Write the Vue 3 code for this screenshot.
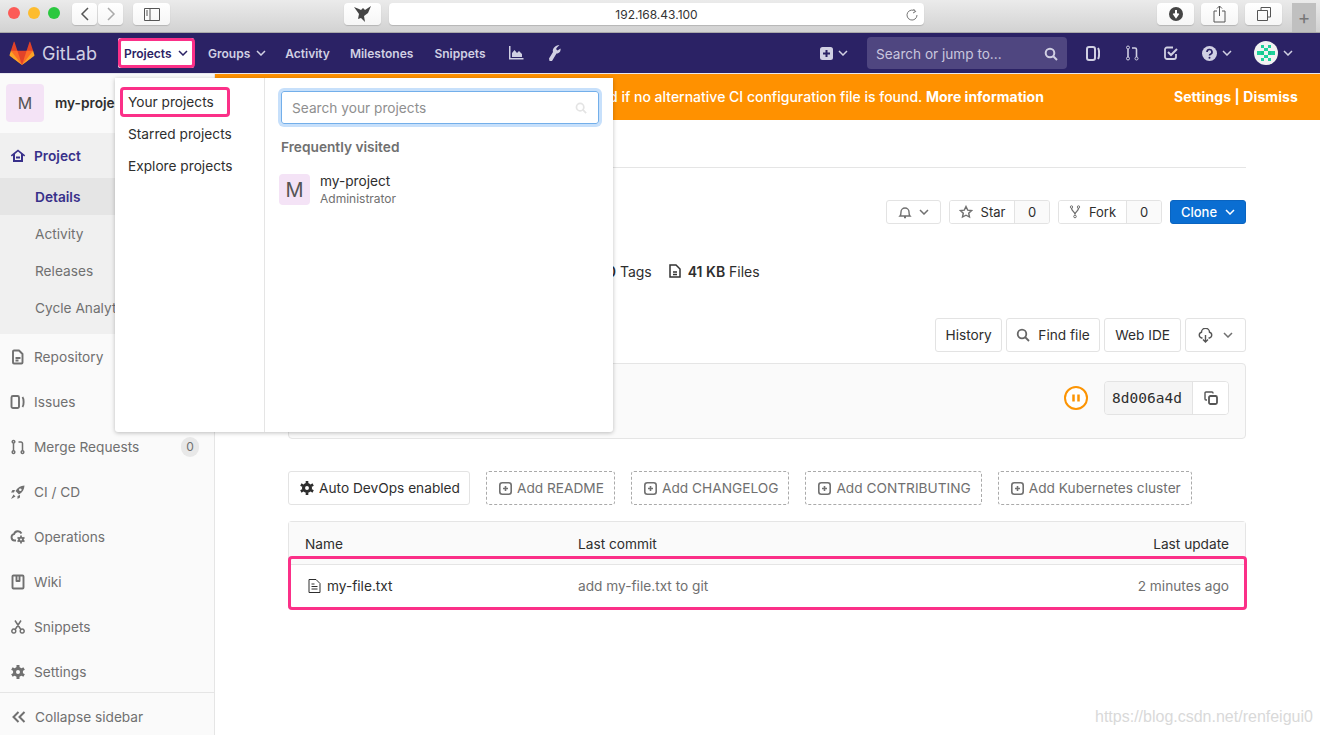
<script setup>
const sideItems = [
  { label: 'Repository', icon: 'M4 1.500h5l3.500 3.500v8.500a1 1 0 0 1-1 1H4a1 1 0 0 1-1-1v-11a1 1 0 0 1 1-1zM5.500 9h5M5.500 11.500h3' },
  { label: 'Issues', icon: 'M3 2h4.500A1.500 1.500 0 0 1 9 3.500v9A1.500 1.500 0 0 1 7.500 14H3a1.500 1.500 0 0 1-1.500-1.500v-9A1.500 1.500 0 0 1 3 2zM12.500 3c1.500 2 1.500 8 0 10' },
  { label: 'Merge Requests', icon: 'M3.500 4.500v7M3.500 1.500a1.300 1.300 0 1 0 .01 0M3.500 11.800a1.300 1.300 0 1 0 .01 0M12.500 11.800V4.500a1.500 1.500 0 0 0-1.500-1.500H8.500M12.500 11.800a1.300 1.300 0 1 0 .01 0', thin: true },
  { label: 'CI / CD', icon: 'M14.500 1.500c-4 .2-7 2-9 5.500l3.500 3.500c3.500-2 5.300-5 5.500-9zM5 6H2.500L1 8.500h3zM10 11v2.500L7.500 15v-3zM3.500 10.500 1 15l4.500-2.500z', filled: true },
  { label: 'Operations', icon: 'M6 11.500H4.500A3.200 3.200 0 0 1 4 5.200a4 4 0 0 1 7.500-.7', cog: true },
  { label: 'Wiki', icon: 'M3.500 1.500h9a1 1 0 0 1 1 1v11a1 1 0 0 1-1 1h-9a1 1 0 0 1-1-1v-11a1 1 0 0 1 1-1zM6.500 2v5h3V2' },
  { label: 'Snippets', icon: 'M5 1.500 10.500 10M11 1.500 5.500 10M3.800 10a2 2 0 1 0 .01 0M12.200 10a2 2 0 1 0 .01 0', thin: true },
  { label: 'Settings', gear: true },
]
const subItems = ['Activity', 'Releases', 'Cycle Analytics']
const addButtons = ['Add README', 'Add CHANGELOG', 'Add CONTRIBUTING', 'Add Kubernetes cluster']
const menuItems = ['Your projects', 'Starred projects', 'Explore projects']
</script>

<template>
  <div class="app">
    <header class="chrome">
      <div class="lights"><i class="red"></i><i class="yellow"></i><i class="green"></i></div>
      <div class="pair">
        <button class="cbtn back"><svg width="10" height="16" viewBox="0 0 10 16"><path d="M8 2 2 8l6 6" class="cstroke" /></svg></button>
        <button class="cbtn fwd"><svg width="10" height="16" viewBox="0 0 10 16"><path d="m2 2 6 6-6 6" class="cstroke dim" /></svg></button>
      </div>
      <button class="cbtn sidebar-btn"><svg width="16" height="13" viewBox="0 0 16 13"><path d="M.5.5h15v12H.5zM6 .5v12M2 3h2M2 5h2M2 7h2" fill="none" stroke="#555" /></svg></button>
      <button class="cbtn bird"><svg width="20" height="18" viewBox="0 0 20 18"><path d="M1 2l5 2 2 1 2-2 2 2 6-4-3 7-4 3 1 6-4-4-3 1 1-5z" fill="#444" /></svg></button>
      <div class="address"><span>192.168.43.100</span><svg class="reload" width="12" height="13" viewBox="0 0 12 13"><path d="M9.500 3.500A5 5 0 1 0 11 7M7.500 1l2.200 2.500-2.700 1.500" fill="none" stroke="#777" /></svg></div>
      <button class="cbtn tool dl"><svg width="14" height="14" viewBox="0 0 14 14"><circle cx="7" cy="7" r="7" fill="#444" /><path d="M7 3v5M4.500 6.500 7 10l2.500-3.500" stroke="#fff" stroke-width="2" fill="none" /></svg></button>
      <button class="cbtn tool"><svg width="13" height="18" viewBox="0 0 13 18"><path d="M4 6H1v11h11V6H9M6.500 11V1M4 3.500 6.500 1 9 3.500" fill="none" stroke="#555" /></svg></button>
      <button class="cbtn tool"><svg width="14" height="14" viewBox="0 0 14 14"><path d="M4 3.500V.5h9.500V10H10.500M.5 3.500h10v10H.5z" fill="none" stroke="#555" /></svg></button>
      <div class="newtab">+</div>
    </header>

    <nav class="navbar">
      <svg class="logo" width="26" height="25" viewBox="0 0 36 36">
        <path fill="#e24329" d="M2 14l9.380 9v-9l-4-12.280c-.205-.632-1.176-.632-1.380 0z" />
        <path fill="#e24329" d="M34 14l-9.380 9v-9l4-12.280c.205-.632 1.176-.632 1.380 0z" />
        <path fill="#e24329" d="M18 34.380 3 14h30z" />
        <path fill="#fc6d26" d="M18 34.380 11.380 14H2l4 11z" />
        <path fill="#fc6d26" d="M18 34.380 24.620 14H34l-4 11z" />
        <path fill="#fca326" d="M2 14 .1 20.160c-.18.565 0 1.200.5 1.560l17.420 12.660z" />
        <path fill="#fca326" d="m34 14 1.900 6.160c.18.565 0 1.200-.5 1.560L18 34.380z" />
      </svg>
      <span class="brand">GitLab</span>
      <a class="nav-link active">Projects<svg class="chev" width="10" height="6" viewBox="0 0 10 6"><path d="m1 1 4 4 4-4" /></svg></a>
      <a class="nav-link groups">Groups<svg class="chev" width="10" height="6" viewBox="0 0 10 6"><path d="m1 1 4 4 4-4" /></svg></a>
      <a class="nav-link">Activity</a>
      <a class="nav-link miles">Milestones</a>
      <a class="nav-link">Snippets</a>
      <svg class="nav-icon chart" width="16" height="16" viewBox="0 0 16 16"><path d="M1 1v13.500h14.500V13H2.500V1zM4 12V8l2.500-3 2.500 3 2-2 3 3v3z" fill="#d1d0e3" /></svg>
      <svg class="nav-icon wrench" width="14" height="18" viewBox="0 0 14 18"><path d="M12.500 1 10 3.500 9 5l1.500 1.500 3-2c.5 2.500-1 5-4 5L5 17H2.500L2 14.500 6 8c-1-3 2-7 6.500-7z" fill="#d1d0e3" /></svg>
      <div class="nav-right">
        <svg class="nav-icon" width="13" height="13" viewBox="0 0 13 13"><rect width="13" height="13" rx="2.500" fill="#d1d0e3" /><path d="M6.500 3v7M3 6.500h7" stroke="#2b2265" stroke-width="2" /></svg>
        <svg class="chev small" width="10" height="6" viewBox="0 0 10 6"><path d="m1 1 4 4 4-4" /></svg>
        <div class="nav-search"><span>Search or jump to...</span>
          <svg width="14" height="14" viewBox="0 0 14 14"><circle cx="6" cy="6" r="4.300" fill="none" stroke="#d1d0e3" stroke-width="2" /><path d="m9 9 4 4" stroke="#d1d0e3" stroke-width="2" /></svg>
        </div>
        <svg class="nav-icon i-issues" width="14" height="15" viewBox="0 0 14 15"><rect x="1" y="1" width="8" height="13" rx="2" fill="none" stroke="#d1d0e3" stroke-width="2" /><path d="M12 2c1.500 2 1.500 9 0 11" fill="none" stroke="#d1d0e3" stroke-width="2" /></svg>
        <svg class="nav-icon i-mr" width="14" height="16" viewBox="0 0 14 16"><path d="M3 4v8M11.500 12V4.500A1.500 1.500 0 0 0 10 3H7" fill="none" stroke="#d1d0e3" stroke-width="1.600" /><circle cx="3" cy="2.500" r="1.500" fill="none" stroke="#d1d0e3" /><circle cx="3" cy="13.500" r="1.500" fill="none" stroke="#d1d0e3" /><circle cx="11.500" cy="13.500" r="1.500" fill="none" stroke="#d1d0e3" /></svg>
        <svg class="nav-icon i-todo" width="14" height="14" viewBox="0 0 14 14"><path d="M12 8v3a2 2 0 0 1-2 2H3a2 2 0 0 1-2-2V3.500a2 2 0 0 1 2-2h6" fill="none" stroke="#d1d0e3" stroke-width="1.800" /><path d="m4 6 3 3 6-6" fill="none" stroke="#d1d0e3" stroke-width="2" /></svg>
        <svg class="nav-icon i-help" width="15" height="15" viewBox="0 0 15 15"><circle cx="7.500" cy="7.500" r="7.500" fill="#d1d0e3" /><path d="M5 6a2.500 2.500 0 1 1 3.500 2.300c-.7.300-1 .7-1 1.200" fill="none" stroke="#2b2265" stroke-width="1.700" /><circle cx="7.500" cy="11.700" r="1" fill="#2b2265" /></svg>
        <svg class="chev small" width="10" height="6" viewBox="0 0 10 6"><path d="m1 1 4 4 4-4" /></svg>
        <svg class="identicon" width="24" height="24" viewBox="0 0 24 24">
          <circle cx="12" cy="12" r="12" fill="#f2f2f2" />
          <path d="M7 4h3v3H7zM14 4h3v3h-3zM10 7h4v3h-4zM3 10h4v4H3zM17 10h4v4h-4zM10 14h4v3h-4zM7 17h3v3H7zM14 17h3v3h-3z" fill="#1fd19b" />
          <path d="M7 10h3v4H7zM14 10h3v4h-3z" fill="#17c98f" />
        </svg>
        <svg class="chev small" width="10" height="6" viewBox="0 0 10 6"><path d="m1 1 4 4 4-4" /></svg>
      </div>
    </nav>

    <div class="body">
      <aside class="sidebar">
        <div class="side-head"><div class="avatar">M</div><b>my-project</b></div>
        <div class="side-scroll">
          <section class="side-active">
            <div class="side-title">
              <svg width="16" height="16" viewBox="0 0 16 16"><path fill-rule="evenodd" d="M8 1.500.8 7.300l1 1.200L3 7.500V14h10V7.500l1.200 1 1-1.200zM5 12V6l3-2.400L11 6v6zM6 8.500h4v2H6z" fill="#38308a" /></svg>
              Project
            </div>
            <div class="sub current">Details</div>
            <div v-for="s in subItems" :key="s" class="sub">{{ s }}</div>
          </section>
          <div v-for="item in sideItems" :key="item.label" class="side-item">
            <svg v-if="item.gear" width="16" height="16" viewBox="0 0 16 16">
              <path d="M8 1v14M1.900 4.500l12.200 7M1.900 11.500l12.200-7" stroke="#707070" stroke-width="3" />
              <circle cx="8" cy="8" r="5" fill="#707070" /><circle cx="8" cy="8" r="2" fill="#fafafa" />
            </svg>
            <svg v-else-if="item.filled" width="16" height="16" viewBox="0 0 16 16"><path :d="item.icon" fill="#707070" /><circle cx="10.300" cy="5.700" r="1.300" fill="#fafafa" /></svg>
            <svg v-else width="16" height="16" viewBox="0 0 16 16">
              <path :d="item.icon" fill="none" stroke="#707070" stroke-linejoin="round" :stroke-width="item.thin ? 1.500 : 1.900" />
              <template v-if="item.cog">
                <path d="M11 6.500v8M7.500 8.500l7 4M7.500 12.500l7-4" stroke="#707070" stroke-width="1.700" />
                <circle cx="11" cy="10.500" r="2.800" fill="#707070" /><circle cx="11" cy="10.500" r="1" fill="#fafafa" />
              </template>
            </svg>
            {{ item.label }}
            <span v-if="item.label === 'Merge Requests'" class="badge">0</span>
          </div>
        </div>
        <div class="collapse">
          <svg width="14" height="12" viewBox="0 0 14 12"><path d="M6.500 1 1.500 6l5 5M12.500 1l-5 5 5 5" fill="none" stroke="#707070" stroke-width="2" /></svg>
          Collapse sidebar
        </div>
      </aside>

      <main class="main">
        <div class="banner">
          <span class="banner-msg">The Auto DevOps pipeline has been enabled and will be used if no alternative CI configuration file is found. <b>More information</b></span>
          <b class="banner-act">Settings | Dismiss</b>
        </div>
        <div class="content">
          <div class="crumbs"></div>
          <div class="actions">
            <button class="btn sm bell">
              <svg width="14" height="14" viewBox="0 0 14 14"><path d="M2 11c1-1 1-2 1-4a4 4 0 0 1 8 0c0 2 0 3 1 4zM6 12.500h2" fill="none" stroke="#707070" stroke-width="1.400" /></svg>
              <svg class="chev grey" width="10" height="6" viewBox="0 0 10 6"><path d="m1 1 4 4 4-4" /></svg>
            </button>
            <div class="split">
              <button class="btn sm left"><svg width="14" height="14" viewBox="0 0 14 14"><path d="m7 1.500 1.700 3.600 3.800.5-2.800 2.600.8 3.800L7 10.200 3.500 12l.8-3.800L1.500 5.600l3.800-.5z" fill="none" stroke="#707070" stroke-width="1.400" /></svg>Star</button>
              <span class="count">0</span>
            </div>
            <div class="split">
              <button class="btn sm left"><svg width="12" height="14" viewBox="0 0 12 14"><path d="M2.500 3c0 4 3.500 3 3.500 6.500M9.500 3C9.500 7 6 6 6 9.500" fill="none" stroke="#707070" stroke-width="1.300" /><circle cx="2.500" cy="2" r="1.200" fill="none" stroke="#707070" /><circle cx="9.500" cy="2" r="1.200" fill="none" stroke="#707070" /><circle cx="6" cy="11.500" r="1.300" fill="none" stroke="#707070" /></svg>Fork</button>
              <span class="count">0</span>
            </div>
            <button class="btn sm clone">Clone<svg class="chev" width="10" height="6" viewBox="0 0 10 6"><path d="m1 1 4 4 4-4" /></svg></button>
          </div>
          <div class="stats">
            <span><b>1</b> Commit</span><span><b>1</b> Branch</span><span><b>0</b> Tags</span>
            <span class="stat-files"><svg width="12" height="14" viewBox="0 0 12 14"><path d="M2 1h5l4 4v8H1V1zM4 8h4M4 10.500h4" fill="none" stroke="#333" stroke-width="1.500" /></svg><span><b>41 KB</b> Files</span></span>
          </div>
          <div class="tree-actions">
            <button class="btn md hist">History</button>
            <button class="btn md"><svg width="14" height="14" viewBox="0 0 14 14"><circle cx="6" cy="6" r="4.300" fill="none" stroke="#666" stroke-width="1.800" /><path d="m9 9 4 4" stroke="#666" stroke-width="1.800" /></svg>Find file</button>
            <button class="btn md ide">Web IDE</button>
            <button class="btn md dlbtn">
              <svg width="15" height="15" viewBox="0 0 15 15"><path d="M4.500 10H3.500a3 3 0 0 1 0-5.800 4 4 0 0 1 8 0 3 3 0 0 1 0 5.800h-1M7.500 7v7M5 11.500 7.500 14 10 11.500" fill="none" stroke="#555" stroke-width="1.400" /></svg>
              <svg class="chev grey" width="10" height="6" viewBox="0 0 10 6"><path d="m1 1 4 4 4-4" /></svg>
            </button>
          </div>
          <div class="commit">
            <div class="commit-msg"><b>add my-file.txt to git</b><span>Administrator authored 2 minutes ago</span></div>
            <svg class="pause" width="24" height="24" viewBox="0 0 24 24"><circle cx="12" cy="12" r="11" fill="#fff" stroke="#fc9403" stroke-width="2" /><path d="M9.500 8.500v7M14.500 8.500v7" stroke="#fc9403" stroke-width="2.500" /></svg>
            <div class="sha"><code>8d006a4d</code><span class="copy"><svg width="14" height="14" viewBox="0 0 14 14"><path d="M9 2.500V2a1 1 0 0 0-1-1H2a1 1 0 0 0-1 1v6a1 1 0 0 0 1 1h1" fill="none" stroke="#555" stroke-width="1.400" /><rect x="5" y="5" width="8" height="8" rx="1.500" fill="none" stroke="#555" stroke-width="1.800" /></svg></span></div>
          </div>
          <div class="quick">
            <button class="btn qbtn auto"><svg width="14" height="14" viewBox="0 0 16 16"><circle cx="8" cy="8" r="4" fill="none" stroke="#2e2e2e" stroke-width="3.500" /><path d="M8 0v3M8 13v3M1 4l2.500 1.500M12.500 10.500 15 12M1 12l2.500-1.500M12.500 5.500 15 4" stroke="#2e2e2e" stroke-width="3" /></svg>Auto DevOps enabled</button>
            <button v-for="b in addButtons" :key="b" class="btn qbtn dashed">
              <svg width="13" height="13" viewBox="0 0 13 13"><rect x=".8" y=".8" width="11.400" height="11.400" rx="2.500" fill="none" stroke="#707070" stroke-width="1.600" /><path d="M6.500 4v5M4 6.500h5" stroke="#707070" stroke-width="1.600" /></svg>{{ b }}
            </button>
          </div>
          <div class="table">
            <div class="row head"><span>Name</span><span>Last commit</span><span class="right">Last update</span></div>
            <div class="row file">
              <span class="fname"><svg width="13" height="14" viewBox="0 0 13 14"><path d="M1 .5h7l4 4v9H1zM3.500 5h3M3.500 7.500h6M3.500 10h6" fill="none" stroke="#2e2e2e" /></svg>my-file.txt</span>
              <span class="muted">add my-file.txt to git</span>
              <span class="muted right">2 minutes ago</span>
            </div>
          </div>
        </div>
      </main>
    </div>

    <div class="dropdown">
      <ul class="menu">
        <li v-for="m in menuItems" :key="m">{{ m }}</li>
      </ul>
      <div class="panel">
        <div class="panel-search"><span>Search your projects</span>
          <svg width="12" height="12" viewBox="0 0 14 14"><circle cx="6" cy="6" r="4.300" fill="none" stroke="#e4e4e4" stroke-width="2" /><path d="m9 9 4 4" stroke="#e4e4e4" stroke-width="2" /></svg>
        </div>
        <h4>Frequently visited</h4>
        <div class="recent">
          <div class="avatar big">M</div>
          <div class="recent-text"><span>my-project</span><small>Administrator</small></div>
        </div>
      </div>
    </div>

    <div class="mark mark-nav"></div>
    <div class="mark mark-menu"></div>
    <div class="mark mark-row"></div>
    <div class="watermark">https://blog.csdn.net/renfeigui0</div>
  </div>
</template>

<style>
html, body { margin: 0; background: #fff; overflow: hidden; }
</style>

<style scoped>
.app { position: relative; width: 1320px; height: 735px; overflow: hidden; display: flex; flex-direction: column; font-family: Inter, "Liberation Sans", sans-serif; font-size: 13.7px; color: #2e2e2e; }
button { font-family: inherit; font-size: inherit; margin: 0; }
.chrome { flex: none; display: flex; align-items: flex-start; background: linear-gradient(#ebebeb, #d2d2d2); border-bottom: 1px solid #aaa; padding-top: 3px; box-sizing: content-box; height: 29px; }
.lights { display: flex; gap: 8px; margin: 4px 0 0 8px; width: 64px; }
.lights i { width: 12px; height: 12px; border-radius: 50%; }
.red { background: #fc5b57; } .yellow { background: #fdbc2e; } .green { background: #2ac83f; }
.cbtn { height: 22px; border: 0; background: linear-gradient(#fff, #f6f6f6); border-radius: 4px; box-shadow: 0 1px 1px #b5b5b5; display: flex; align-items: center; justify-content: center; padding: 0; }
.pair { display: flex; gap: 1px; }
.back, .fwd { width: 25px; }
.cstroke { fill: none; stroke: #555; stroke-width: 1.500; }
.dim { stroke: #aaa; }
.sidebar-btn { width: 37px; margin-left: 10px; }
.bird { width: 37px; margin-left: 174px; }
.address { width: 535px; height: 22px; margin-left: 8px; background: #fff; border-radius: 4px; box-shadow: 0 1px 1px #b5b5b5; display: flex; align-items: center; justify-content: center; position: relative; font-size: 12px; color: #333; }
.reload { position: absolute; right: 6px; top: 5px; }
.tool { width: 37px; margin-left: 7px; }
.dl { margin-left: 233px; }
.newtab { width: 24px; height: 29px; margin: 0 0 0 10px; background: #c0c0c0; color: #777; font-size: 19px; text-align: center; line-height: 30px; }

.navbar { height: 40px; flex: none; background: #2b2265; display: flex; align-items: center; border-bottom: 1px solid #e7e7f0; color: #d1d0e3; font-weight: 600; font-size: 12px; }
.logo { margin-left: 9px; }
.brand { color: #d1d0e3; font-size: 18px; font-weight: 400; margin-left: 7px; width: 76px; }
.nav-link { display: flex; align-items: center; gap: 6px; margin-right: 20px; white-space: nowrap; }
.nav-link.groups { margin-right: 19px; }
.nav-link.miles { margin-right: 21px; }
.nav-link.active { color: #2b2265; background: #fff; height: 30px; margin-right: 14px; padding: 0 6px; width: 64px; border-radius: 2px; }
.chev { fill: none; stroke: currentColor; stroke-width: 1.500; flex: none; }
.chev.grey { color: #707070; }
.nav-icon { flex: none; }
.chart { margin: 0 23px 0 3px; }
.nav-right { margin-left: auto; display: flex; align-items: center; padding-right: 27px; }
.chev.small { margin-left: 5px; }
.nav-search { width: 200px; height: 32px; margin-left: 19px; background: #4f4680; border-radius: 4px; display: flex; align-items: center; justify-content: space-between; padding: 1px 9px 0; box-sizing: border-box; font-weight: 400; font-size: 13.6px; color: #c9c6de; }
.i-issues { margin-left: 19px; }
.i-mr { margin-left: 25px; }
.i-todo { margin-left: 25px; }
.i-help { margin-left: 24px; }
.identicon { margin-left: 22px; }

.body { flex: 1; display: flex; min-height: 0; }
.sidebar { width: 215px; flex: none; box-sizing: border-box; background: #fafafa; border-right: 1px solid #e5e5e5; display: flex; flex-direction: column; color: #707070; }
.side-head { height: 59px; flex: none; box-sizing: border-box; padding: 0 0 1px 6px; display: flex; align-items: center; gap: 11px; color: #2e2e2e; }
.side-head b { font-weight: 600; width: 60px; overflow: hidden; white-space: nowrap; }
.avatar { width: 38px; height: 38px; background: #f4e3f6; border-radius: 4px; display: flex; align-items: center; justify-content: center; color: #555; font-size: 16px; }
.side-scroll { flex: 1; min-height: 0; margin-bottom: -2px; }
.side-active { background: #f0f0f0; padding-bottom: 8px; }
.side-title { height: 45px; display: flex; align-items: center; gap: 8px; padding-left: 10px; color: #38308a; font-weight: 600; }
.sub { height: 37px; display: flex; align-items: center; padding-left: 35px; white-space: nowrap; }
.sub.current { background: #e5e5e5; color: #38308a; font-weight: 600; }
.side-item { height: 45px; display: flex; align-items: center; gap: 8px; padding-left: 10px; position: relative; }
.badge { position: absolute; left: 181px; top: 13px; width: 18px; height: 20px; border-radius: 10px; background: #e8e8e8; text-align: center; font-size: 12px; line-height: 20px; }
.collapse { height: 43px; flex: none; box-sizing: border-box; padding: 5px 0 0 12px; position: relative; background: #fafafa; border-top: 1px solid #e5e5e5; display: flex; align-items: center; gap: 9px; }

.main { flex: 1; min-width: 0; overflow: hidden; }
.banner { height: 46px; box-sizing: border-box; padding: 0 22px 1px 0; background: #ff9100; color: #fff; display: flex; align-items: center; justify-content: flex-end; gap: 130px; font-size: 14px; font-weight: 500; white-space: nowrap; }
.banner b { font-weight: 700; }
.banner-act { letter-spacing: .1px; }
.content { padding: 0 74px 0 73px; }
.crumbs { height: 47px; border-bottom: 1px solid #e5e5e5; }
.actions { display: flex; justify-content: flex-end; gap: 8px; margin-top: 32px; height: 24px; }
.btn { background: #fff; border: 1px solid #e3e3e3; border-radius: 3px; color: #2e2e2e; display: inline-flex; align-items: center; justify-content: center; gap: 8px; padding: 0; white-space: nowrap; box-sizing: border-box; }
.sm { height: 24px; font-size: 13px; }
.bell { width: 55px; gap: 7px; }
.split { display: flex; border: 1px solid #e3e3e3; border-radius: 3px; height: 24px; box-sizing: border-box; overflow: hidden; }
.split .left { border: 0; height: 22px; width: 65px; border-right: 1px solid #e3e3e3; border-radius: 0; }
.split:nth-of-type(2) .left { width: 68px; }
.count { width: 34px; background: #fafafa; text-align: center; line-height: 22px; font-size: 13px; }
.clone { width: 76px; background: #0a6ed2; color: #fff; border-color: #0a64c0; font-weight: 500; }
.stats { display: flex; gap: 17px; margin-top: 37px; height: 20px; align-items: center; padding-left: 167px; white-space: nowrap; font-size: 14px; }
.stats b { font-weight: 600; }
.stat-files { display: inline-flex; align-items: center; gap: 7px; }
.tree-actions { display: flex; justify-content: flex-end; gap: 4px; margin-top: 37px; height: 34px; }
.md { height: 34px; padding: 0 9.500px; }
.md.hist { padding: 0 9px; }
.md.ide { padding: 0 10px; }
.dlbtn { width: 61px; gap: 10px; }
.commit { height: 76px; margin-top: 11px; box-sizing: border-box; background: #fafafa; border: 1px solid #e5e5e5; border-radius: 4px; display: flex; align-items: center; padding: 0 16px; }
.commit-msg { display: flex; flex-direction: column; gap: 6px; margin-right: auto; }
.pause { margin: 0 16px 6px 0; }
.sha { display: flex; height: 34px; width: 125px; box-sizing: border-box; border: 1px solid #e3e3e3; border-radius: 4px; overflow: hidden; margin-bottom: 6px; }
.sha code { width: 88px; flex: none; box-sizing: border-box; padding-right: 3px; background: #f5f5f5; border-right: 1px solid #e3e3e3; display: flex; align-items: center; justify-content: center; font-family: "DejaVu Sans Mono", monospace; font-size: 14.500px; }
.copy { flex: 1; background: #fff; display: flex; align-items: center; justify-content: center; }
.quick { display: flex; gap: 16px; margin-top: 32px; }
.qbtn { height: 34px; padding: 0 10px 0 12px; gap: 5px; }
.qbtn.auto { padding: 0 9px 0 11px; }
.dashed { border: 1px dashed #aaa; color: #707070; background: #fff; }
.table { margin-top: 16px; border: 1px solid #e5e5e5; border-bottom: 0; border-radius: 4px 4px 0 0; }
.row { display: grid; grid-template-columns: 273px 1fr 200px; padding: 0 16px; }
.head { height: 43px; box-sizing: border-box; background: #fafafa; align-items: center; padding-top: 2px; border-bottom: 1px solid #e5e5e5; }
.file { height: 43px; box-sizing: border-box; padding-bottom: 2px; align-items: center; }
.right { text-align: right; }
.muted { color: #707070; }
.fname { display: flex; align-items: center; gap: 6px; padding-left: 3px; }

.dropdown { position: absolute; left: 115px; top: 78px; width: 498px; height: 354px; background: #fff; border-radius: 0 0 3px 3px; box-shadow: 0 1px 4px rgba(0, 0, 0, .25); display: flex; }
.menu { width: 149px; margin: 0; padding: 8px 0 0; list-style: none; border-right: 1px solid #e5e5e5; flex: none; }
.menu li { height: 32px; display: flex; align-items: center; padding-left: 13px; }
.panel { flex: 1; padding: 13px 14px 0 16px; }
.panel-search { height: 33px; box-sizing: border-box; border: 1px solid #73afea; border-radius: 3px; box-shadow: 0 0 0 3px #c7e0fb; display: flex; align-items: center; justify-content: space-between; padding: 0 11px 0 10px; color: #8f8f8f; }
.panel h4 { margin: 15px 0 0; font-size: 13.7px; line-height: 17px; font-weight: 600; color: #707070; }
.recent { display: flex; margin: 18px 0 0 -2px; gap: 10px; }
.avatar.big { width: 31px; height: 31px; font-size: 20px; }
.recent-text { display: flex; flex-direction: column; margin-top: -2px; line-height: 18px; }
.recent-text small { font-size: 12px; color: #707070; }

.mark { position: absolute; border: 3px solid #fb3088; border-radius: 4px; box-sizing: border-box; pointer-events: none; }
.mark-nav { left: 118px; top: 38px; width: 77px; height: 30px; }
.mark-menu { left: 120px; top: 87px; width: 110px; height: 30px; }
.mark-row { left: 288px; top: 556px; width: 959px; height: 54px; }
.watermark { position: absolute; left: 1095px; top: 708px; font-size: 16px; color: #d9d9d9; white-space: nowrap; font-family: "Liberation Sans", sans-serif; }
</style>
